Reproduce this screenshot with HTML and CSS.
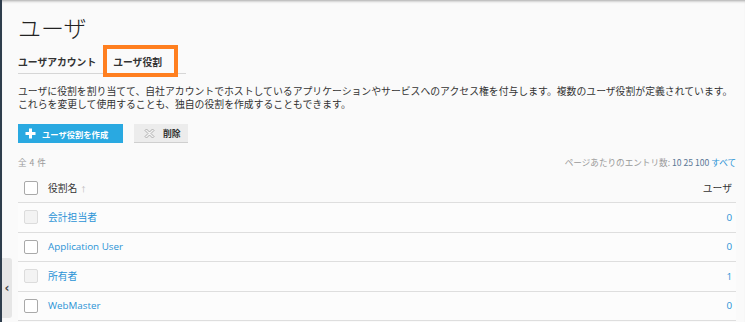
FILE: index.html
```html
<!DOCTYPE html>
<html lang="ja">
<head>
<meta charset="utf-8">
<title>ユーザ役割</title>
<link rel="stylesheet" href="styles.css">
</head>
<body>
<div class="app">
  <main class="page">
    <h1 class="title">ユーザ</h1>
    <nav class="tabs">
      <a class="tab">ユーザアカウント</a>
      <a class="tab active">ユーザ役割</a>
    </nav>
    <p class="desc">ユーザに役割を割り当てて、自社アカウントでホストしているアプリケーションやサービスへのアクセス権を付与します。複数のユーザ役割が定義されています。<br>これらを変更して使用することも、独自の役割を作成することもできます。</p>
    <div class="actions">
      <button class="btn primary">
        <svg class="ico" width="11" height="11" viewBox="0 0 11 11"><path d="M5.5 0.5v10M0.5 5.5h10" stroke="#fff" stroke-width="3"/></svg>
        <span>ユーザ役割を作成</span>
      </button>
      <button class="btn plain">
        <svg class="ico" width="11" height="11" viewBox="0 0 11 11"><path d="M1 2.5L2.5 1L5.5 4L8.5 1L10 2.5L7 5.5L10 8.5L8.5 10L5.5 7L2.5 10L1 8.5L4 5.5Z" fill="#f2f2f2" stroke="#a8a8a8" stroke-width="0.9" stroke-linejoin="round"/></svg>
        <span>削除</span>
      </button>
    </div>
    <div class="meta">
      <span class="count">全 4 件</span>
      <span class="perpage">ページあたりのエントリ数: <span class="cur">10 25 100</span> <a class="link">すべて</a></span>
    </div>
    <div class="table">
      <div class="row head">
        <span class="cb"></span>
        <span class="name">役割名 <span class="sort">↑</span></span>
        <span class="num">ユーザ</span>
      </div>
      <div class="row">
        <span class="cb disabled"></span>
        <a class="name link">会計担当者</a>
        <a class="num link">0</a>
      </div>
      <div class="row">
        <span class="cb"></span>
        <a class="name link">Application User</a>
        <a class="num link">0</a>
      </div>
      <div class="row">
        <span class="cb disabled"></span>
        <a class="name link">所有者</a>
        <a class="num link">1</a>
      </div>
      <div class="row">
        <span class="cb"></span>
        <a class="name link">WebMaster</a>
        <a class="num link">0</a>
      </div>
    </div>
  </main>
  <div class="collapse">‹</div>
</div>
</body>
</html>
```
FILE: styles.css
```css
* { box-sizing: border-box; }
html, body { margin: 0; padding: 0; }
body {
  width: 745px;
  height: 322px;
  overflow: hidden;
  background: #fafafa;
  font-family: "Noto Sans CJK JP", "Open Sans", sans-serif;
  color: #333;
}
.app {
  position: relative;
  height: 322px;
  border-left: 2px solid #2e3d4c;
  background: #fafafa;
  box-shadow: inset 0 3px 3px -2px rgba(0,0,0,0.35);
}
.page {
  padding: 11px 9px 0 16px;
  display: flex;
  flex-direction: column;
}
.title {
  margin: 0;
  font-size: 23px;
  line-height: 32px;
  height: 29px;
  font-weight: 300;
  color: #222;
}
.tabs {
  margin-top: 15px;
  display: flex;
  gap: 17px;
  width: 168px;
  border-bottom: 1px solid #d6d6d6;
}
.tab {
  position: relative;
  font-size: 9.8px;
  font-weight: 700;
  line-height: 14px;
  padding-bottom: 4px;
  color: #333;
  white-space: nowrap;
}
.tab.active {
  border-bottom: 2px solid #222;
  margin-bottom: -2px;
}
.tab.active::after {
  content: "";
  position: absolute;
  left: -10px;
  right: -16px;
  top: -10px;
  bottom: -4px;
  border: 4px solid #ff7f1f;
}
.desc {
  margin: 11px 0 0;
  font-size: 9.85px;
  line-height: 13px;
  color: #333;
  white-space: nowrap;
}
.actions {
  margin-top: 13px;
  display: flex;
  gap: 11px;
}
.btn {
  height: 19px;
  border: 0;
  padding: 0 9px 0 7px;
  display: flex;
  align-items: center;
  gap: 6px;
  font-family: inherit;
  font-size: 8.3px;
  font-weight: 700;
  white-space: nowrap;
  flex: none;
}
.btn.primary {
  width: 105px;
  background: #29a9e1;
  color: #fff;
}
.btn.plain {
  width: 54px;
  padding: 0 0 0 10px;
  background: #ececec;
  color: #333;
  border-bottom: 1px solid #cfcfcf;
  gap: 8px;
  font-size: 8.8px;
}
.meta {
  margin-top: 13px;
  display: flex;
  justify-content: space-between;
  font-size: 8.6px;
  line-height: 12px;
  color: #999;
}
.count { word-spacing: 1px; }
.perpage .cur { color: #5a7896; }
.link { color: #2a93d6; text-decoration: none; }
.table {
  margin-top: 6px;
  display: flex;
  flex-direction: column;
}
.row {
  display: flex;
  align-items: center;
  height: 29.5px;
  padding: 0 4px 0 6px;
  border-bottom: 1px solid #dedede;
  background: #fcfcfc;
  font-size: 9.8px;
}
.row.head {
  height: 29px;
  background: transparent;
  color: #333;
}
.cb {
  width: 14px;
  height: 14px;
  border: 1px solid #a9a9a9;
  border-radius: 2px;
  background: #fff;
  flex: none;
}
.cb.disabled {
  border-color: #dcdcdc;
  background: #f3f3f3;
}
.name {
  margin-left: 10px;
  flex: 1;
  font-family: "Open Sans", "Noto Sans CJK JP", sans-serif;
}
.sort { color: #b5b5b5; font-size: 7px; }
.num {
  font-family: "Open Sans", "Noto Sans CJK JP", sans-serif;
  text-align: right;
}
.collapse {
  position: absolute;
  left: 0;
  top: 258px;
  width: 10px;
  height: 60px;
  background: #e6e6e6;
  border-radius: 0 3px 3px 0;
  display: flex;
  align-items: center;
  justify-content: center;
  font-family: "DejaVu Sans", sans-serif;
  font-size: 12px;
  font-weight: 700;
  color: #444;
}
```
